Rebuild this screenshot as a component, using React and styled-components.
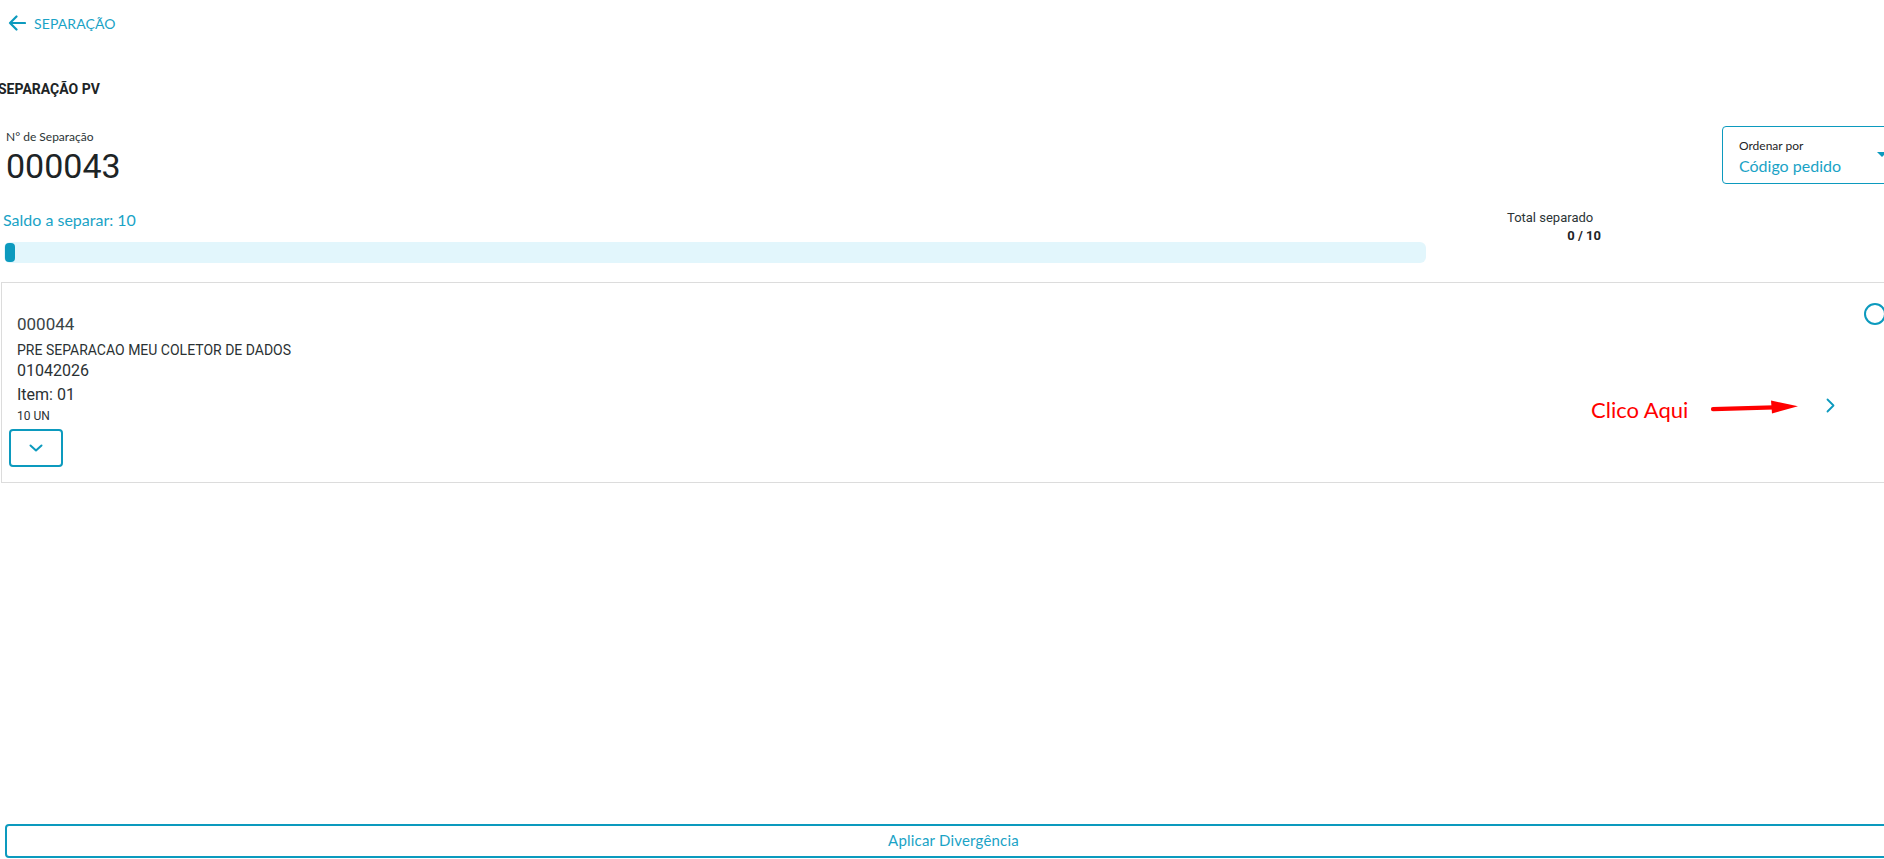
import React from "react";
import styled, { createGlobalStyle } from "styled-components";

const PRIMARY = "#0c9abe";
const TEXT_ACCENT = "#1aa3c6";

const Global = createGlobalStyle`
  html, body {
    margin: 0;
    padding: 0;
    background: #ffffff;
    overflow: hidden;
  }
  body {
    font-family: Lato, "Noto Sans", sans-serif;
    color: #1d2426;
  }
`;

const Page = styled.div`
  width: 1902px;
  height: 859px;
  display: flex;
  flex-direction: column;
`;

const BackLink = styled.a`
  display: flex;
  align-items: center;
  gap: 8px;
  margin: 13px 0 0 8px;
  height: 20px;
  color: ${TEXT_ACCENT};
  font-size: 14px;
  letter-spacing: 0.1px;
  cursor: pointer;
`;

const Title = styled.h1`
  margin: 46px 0 0 -2px;
  font-family: Roboto, sans-serif;
  font-weight: 700;
  font-size: 14px;
  line-height: 20px;
  color: #1d2426;
`;

const InfoRow = styled.div`
  display: flex;
  justify-content: space-between;
  align-items: flex-start;
  margin-top: 27px;
`;

const NumberField = styled.div`
  display: flex;
  flex-direction: column;
  gap: 2px;
  padding: 3px 0 0 6px;
`;

const FieldLabel = styled.span`
  font-size: 12px;
  line-height: 16px;
  color: #2b3436;
`;

const BigNumber = styled.span`
  font-family: Roboto, sans-serif;
  font-size: 34px;
  line-height: 38px;
  color: #1d2426;
`;

const SortSelect = styled.div`
  position: relative;
  box-sizing: border-box;
  width: 180px;
  height: 58px;
  border: 1px solid ${PRIMARY};
  border-radius: 4px;
  padding: 11px 0 0 16px;
  display: flex;
  flex-direction: column;
  gap: 1px;
`;

const SortLabel = styled.span`
  font-size: 12px;
  line-height: 16px;
  color: #1d2426;
`;

const SortValue = styled.span`
  font-size: 16px;
  line-height: 22px;
  color: ${TEXT_ACCENT};
`;

const Caret = styled.span`
  position: absolute;
  right: 14px;
  top: 25px;
  width: 0;
  height: 0;
  border-left: 5px solid transparent;
  border-right: 5px solid transparent;
  border-top: 5px solid ${PRIMARY};
`;

const ProgressRow = styled.div`
  display: flex;
  align-items: flex-start;
  gap: 81px;
  margin-top: 25px;
`;

const ProgressCol = styled.div`
  display: flex;
  flex-direction: column;
  gap: 12px;
  margin-left: 4px;
  width: 1422px;
`;

const Balance = styled.span`
  font-size: 16px;
  line-height: 20px;
  color: ${TEXT_ACCENT};
  margin-left: -1px;
`;

const Track = styled.div`
  height: 21px;
  border-radius: 6px;
  background: #e2f6fc;
  display: flex;
  align-items: center;
  padding-left: 1px;
`;

const Fill = styled.div`
  height: 19px;
  border-radius: 4px;
  background: ${PRIMARY};
`;

const Total = styled.div`
  width: 94px;
  display: flex;
  flex-direction: column;
  gap: 2px;
  font-family: Roboto, sans-serif;
  font-size: 13px;
  line-height: 16px;
  color: #2b3436;
`;

const TotalValue = styled.span`
  align-self: flex-end;
  font-weight: 700;
  color: #1d2426;
`;

const Card = styled.div`
  position: relative;
  margin: 19px 0 0 1px;
  box-sizing: border-box;
  height: 201px;
  border: 1px solid #dcdcdc;
  display: flex;
  align-items: flex-start;
  padding: 31px 15px 0 7px;
`;

const CardInfo = styled.div`
  flex: 1;
  display: flex;
  flex-direction: column;
  font-family: Roboto, sans-serif;
  color: #333b3d;
`;

const Line = styled.span`
  padding-left: 8px;
  font-size: ${(p) => p.$size}px;
  line-height: ${(p) => p.$lh}px;
  margin-top: ${(p) => p.$mt || 0}px;
  color: ${(p) => p.$color || "#2a3133"};
`;

const ExpandButton = styled.button`
  margin-top: 5px;
  width: 54px;
  height: 38px;
  box-sizing: border-box;
  border: 2px solid ${PRIMARY};
  border-radius: 4px;
  background: #fff;
  display: flex;
  align-items: center;
  justify-content: center;
  padding: 0;
  cursor: pointer;
`;

const NextButton = styled.button`
  margin-top: 79px;
  width: 24px;
  height: 24px;
  border: none;
  background: transparent;
  display: flex;
  align-items: center;
  justify-content: center;
  padding: 0;
  cursor: pointer;
`;

const Radio = styled.span`
  margin: -11px 0 0 22px;
  width: 22px;
  height: 22px;
  box-sizing: border-box;
  border: 2px solid ${PRIMARY};
  border-radius: 50%;
`;

const Note = styled.div`
  position: absolute;
  left: 1589px;
  top: 114px;
  display: flex;
  align-items: center;
  gap: 22px;
`;

const NoteText = styled.span`
  font-family: Lato, "Open Sans", sans-serif;
  font-size: 22px;
  line-height: 26px;
  color: #ff0000;
`;

const ArrowWrap = styled.span`
  display: flex;
  margin-top: -8px;
`;

const Footer = styled.div`
  margin-top: auto;
  padding: 0 0 1px 5px;
`;

const DivergenceButton = styled.button`
  width: 100%;
  height: 34px;
  box-sizing: border-box;
  border: 2px solid ${PRIMARY};
  border-radius: 4px;
  background: #fff;
  color: ${TEXT_ACCENT};
  font-family: Lato, "Noto Sans", sans-serif;
  font-size: 15px;
  letter-spacing: 0.2px;
  padding-bottom: 3px;
  cursor: pointer;
`;

const BackArrow = () => (
  <svg width="18" height="16" viewBox="0 0 18 16" fill="none">
    <path d="M17 8H2M8.5 1.5L2 8l6.5 6.5" stroke={PRIMARY} strokeWidth="2.2" strokeLinecap="round" strokeLinejoin="round" />
  </svg>
);

const ChevronDown = () => (
  <svg width="14" height="8" viewBox="0 0 14 8" fill="none">
    <path d="M1.5 1.5L7 6.5l5.5-5" stroke={PRIMARY} strokeWidth="2" strokeLinecap="round" strokeLinejoin="round" />
  </svg>
);

const ChevronRight = () => (
  <svg width="9" height="15" viewBox="0 0 9 15" fill="none">
    <path d="M1.5 1.5l6 6-6 6" stroke={PRIMARY} strokeWidth="1.8" strokeLinecap="round" strokeLinejoin="round" />
  </svg>
);

const RedArrow = () => (
  <svg width="90" height="16" viewBox="0 0 90 16" fill="none">
    <path d="M3 11.2L64 9.4" stroke="#ff0000" strokeWidth="4.2" strokeLinecap="round" />
    <path d="M61 2.5L88 8.3L62 15.5Z" fill="#ff0000" />
  </svg>
);

export default function App() {
  const separated = 0;
  const total = 10;
  const pct = Math.max(0.7, (separated / total) * 100);

  return (
    <>
      <Global />
      <Page>
        <BackLink>
          <BackArrow />
          SEPARAÇÃO
        </BackLink>

        <Title>SEPARAÇÃO PV</Title>

        <InfoRow>
          <NumberField>
            <FieldLabel>N° de Separação</FieldLabel>
            <BigNumber>000043</BigNumber>
          </NumberField>
          <SortSelect>
            <SortLabel>Ordenar por</SortLabel>
            <SortValue>Código pedido</SortValue>
            <Caret />
          </SortSelect>
        </InfoRow>

        <ProgressRow>
          <ProgressCol>
            <Balance>Saldo a separar: {total - separated}</Balance>
            <Track>
              <Fill style={{ width: `${pct}%` }} />
            </Track>
          </ProgressCol>
          <Total>
            <span>Total separado</span>
            <TotalValue>
              {separated} / {total}
            </TotalValue>
          </Total>
        </ProgressRow>

        <Card>
          <CardInfo>
            <Line $size={17} $lh={20} $color="#3a4446">000044</Line>
            <Line $size={14} $lh={18} $mt={7}>PRE SEPARACAO MEU COLETOR DE DADOS</Line>
            <Line $size={16} $lh={20} $mt={2}>01042026</Line>
            <Line $size={16} $lh={20} $mt={4}>Item: 01</Line>
            <Line $size={12} $lh={16} $mt={3}>10 UN</Line>
            <ExpandButton aria-label="Expandir">
              <ChevronDown />
            </ExpandButton>
          </CardInfo>
          <NextButton aria-label="Abrir">
            <ChevronRight />
          </NextButton>
          <Radio />
          <Note>
            <NoteText>Clico Aqui</NoteText>
            <ArrowWrap>
              <RedArrow />
            </ArrowWrap>
          </Note>
        </Card>

        <Footer>
          <DivergenceButton>Aplicar Divergência</DivergenceButton>
        </Footer>
      </Page>
    </>
  );
}
